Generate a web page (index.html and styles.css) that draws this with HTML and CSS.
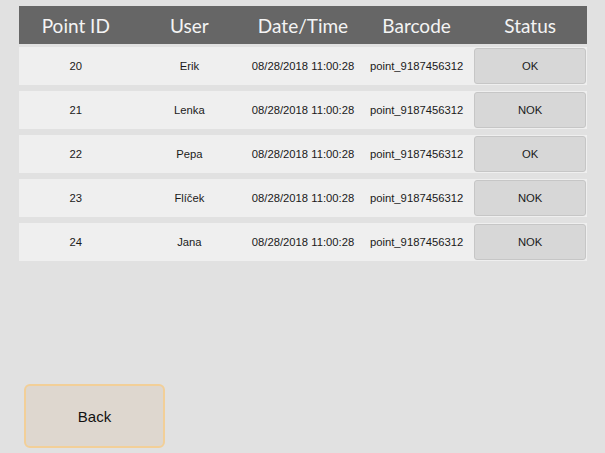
FILE: index.html
```html
<!DOCTYPE html>
<html>
<head>
<meta charset="utf-8">
<link rel="stylesheet" href="styles.css">
</head>
<body>
<div class="screen">
  <div class="table">
    <div class="head">
      <div class="cell">Point ID</div>
      <div class="cell">User</div>
      <div class="cell">Date/Time</div>
      <div class="cell">Barcode</div>
      <div class="cell">Status</div>
    </div>
    <div class="row">
      <div class="cell">20</div><div class="cell">Erik</div><div class="cell">08/28/2018 11:00:28</div><div class="cell">point_9187456312</div><div class="cell status"><span class="btn">OK</span></div>
    </div>
    <div class="row">
      <div class="cell">21</div><div class="cell">Lenka</div><div class="cell">08/28/2018 11:00:28</div><div class="cell">point_9187456312</div><div class="cell status"><span class="btn">NOK</span></div>
    </div>
    <div class="row">
      <div class="cell">22</div><div class="cell">Pepa</div><div class="cell">08/28/2018 11:00:28</div><div class="cell">point_9187456312</div><div class="cell status"><span class="btn">OK</span></div>
    </div>
    <div class="row">
      <div class="cell">23</div><div class="cell">Flíček</div><div class="cell">08/28/2018 11:00:28</div><div class="cell">point_9187456312</div><div class="cell status"><span class="btn">NOK</span></div>
    </div>
    <div class="row">
      <div class="cell">24</div><div class="cell">Jana</div><div class="cell">08/28/2018 11:00:28</div><div class="cell">point_9187456312</div><div class="cell status"><span class="btn">NOK</span></div>
    </div>
  </div>
  <div class="footer">
    <button class="back">Back</button>
  </div>
</div>
</body>
</html>
```
FILE: styles.css
```css
html, body {
  margin: 0;
  padding: 0;
  background: #e1e1e1;
  font-family: Lato, "Liberation Sans", sans-serif;
}
.screen {
  width: 605px;
  height: 453px;
  display: flex;
  flex-direction: column;
  justify-content: space-between;
  box-sizing: border-box;
  padding: 6px 18px 5px 19px;
}
.table {
  display: flex;
  flex-direction: column;
  gap: 6px;
}
.head, .row {
  display: grid;
  grid-template-columns: repeat(5, 1fr);
  align-items: center;
}
.head {
  height: 38px;
  background: #666666;
  color: #f4f4f4;
  font-size: 19px;
  margin-bottom: -3px;
}
.row {
  height: 38px;
  background: #efefef;
  color: #1a1a1a;
  font-family: "Liberation Sans", Arial, sans-serif;
  font-size: 11.25px;
}
.cell {
  text-align: center;
  white-space: nowrap;
}
.status {
  height: 100%;
  display: flex;
  padding: 1px 1px 1px 1px;
  box-sizing: border-box;
}
.btn {
  flex: 1;
  display: flex;
  align-items: center;
  justify-content: center;
  background: #d7d7d7;
  border: 1px solid #c6c6c6;
  border-radius: 3px;
}
.footer {
  display: flex;
  padding-left: 5px;
}
.back {
  width: 141px;
  height: 64px;
  background: #ded7cf;
  border: 2px solid #f2cf98;
  border-radius: 6px;
  font-family: "Liberation Sans", Arial, sans-serif;
  font-size: 15px;
  color: #111;
  padding: 0;
}
```
